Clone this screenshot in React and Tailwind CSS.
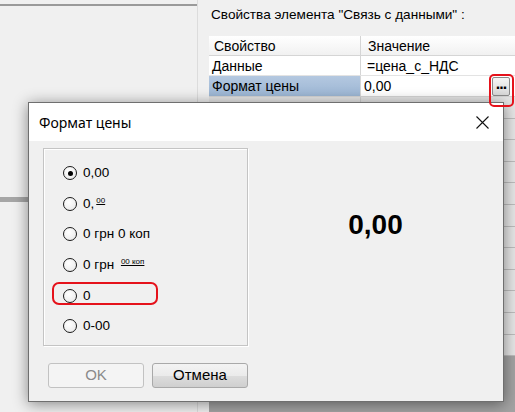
import React from "react";

const rows = Array.from({ length: 12 });

function Radio({ checked }) {
  return (
    <span className="relative inline-flex w-[14px] h-[14px] rounded-full border-[1.5px] border-[#1a1a1a] bg-[radial-gradient(circle_at_40%_35%,#ffffff,#e6e6e6)] items-center justify-center shrink-0">
      {checked && <span className="w-[5px] h-[5px] rounded-full bg-black" />}
    </span>
  );
}

function Sup({ children }) {
  return (
    <span className="text-[8px] underline relative top-[-5px] leading-none">{children}</span>
  );
}

export default function App() {
  const opts = [
    { c: true, label: <>0,00</> },
    { label: <>0,<span className="ml-[2px]"><Sup>00</Sup></span></> },
    { label: <>0 грн 0 коп</> },
    { label: <>0 грн <span className="ml-[3px]"><Sup>00 коп</Sup></span></> },
    { label: <>0</> },
    { label: <>0-00</> },
  ];
  return (
    <div className="relative w-[515px] h-[412px] overflow-hidden bg-[#f0f0f0] flex text-black" style={{ fontFamily: '"Liberation Sans", Arial, sans-serif' }}>
      {/* left panel */}
      <div className="w-[197px] shrink-0 flex flex-col">
        <div className="mt-[4px] h-[2px] bg-[#9a9a9a]" />
        <div className="mt-[191px] h-[5px] bg-[#a6a6a6]" />
      </div>
      <div className="w-[1px] bg-[#dcdcdc] shrink-0" />
      {/* right panel */}
      <div className="flex-1 flex flex-col pl-[11px] min-w-0">
        <div className="h-[36px] pt-[7px] pl-[2px] text-[13.6px] leading-[16px] whitespace-nowrap">Свойства элемента "Связь с данными" :</div>
        <div className="flex-1 bg-[#a3a3a3] flex flex-col text-[14px] leading-none">
          <div className="h-[20px] flex bg-[linear-gradient(#ffffff,#f1f1f1)] border-b border-[#d5d5d5]">
            <div className="w-[152px] border-r border-[#d5d5d5] flex items-center pl-[5px]">Свойство</div>
            <div className="flex-1 flex items-center pl-[7px]">Значение</div>
          </div>
          <div className="h-[20px] flex bg-white border-b border-[#e3e3e3]">
            <div className="w-[152px] border-r border-[#d5d5d5] flex items-center pl-[3px]">Данные</div>
            <div className="flex-1 flex items-center pl-[6px] whitespace-nowrap">=цена_с_НДС</div>
          </div>
          <div className="h-[21px] flex bg-white border-b border-[#d5d5d5]">
            <div className="w-[152px] border-r border-[#d5d5d5] flex items-center pl-[3px] bg-[linear-gradient(#b4c8e0,#9cb6d4)]">Формат цены</div>
            <div className="flex-1 flex items-center pl-[3px]">0,00</div>
            <div className="w-[18px] h-[19px] mr-[5px] mt-[1px] border border-[#8a8a8a] rounded-[2px] bg-[linear-gradient(#f6f6f6,#d8d8d8)] flex items-center justify-center font-bold text-[16px] leading-none pb-[6px] tracking-[-1px]">...</div>
          </div>
          {rows.map((_, i) => (
            <div key={i} className="h-[21.6px] flex bg-[#e6e6e6] border-b border-[#bdbdbd] shrink-0">
              <div className="w-[152px] border-r border-[#cfcfcf]" />
              <div className="flex-1" />
            </div>
          ))}
        </div>
      </div>

      {/* dialog */}
      <div className="absolute left-[28px] top-[102px] w-[476px] h-[300px] border border-[#6f6f6f] bg-[#f0f0f0] shadow-[0_2px_14px_rgba(0,0,0,0.45)] flex flex-col">
        <div className="h-[38px] bg-white flex items-center justify-between pl-[10px] pr-[14px] shrink-0">
          <span className="text-[14px]" style={{ fontFamily: '"Noto Sans", sans-serif' }}>Формат цены</span>
          <svg width="13" height="13" viewBox="0 0 13 13"><path d="M0.5 0.5L12.5 12.5M12.5 0.5L0.5 12.5" stroke="#111" strokeWidth="1.1" /></svg>
        </div>
        <div className="flex-1 flex flex-col pl-[14px] pt-[7px]">
          <div className="flex">
            <div className="w-[205px] h-[198px] border border-[#c4c4c4] shadow-[inset_1px_1px_0_#ffffff,1px_1px_0_#ffffff] pt-[9px] pl-[19px] flex flex-col text-[13.5px]">
              {opts.map((o, i) => (
                <div key={i} className="h-[30.6px] flex items-center gap-[6px] whitespace-nowrap">
                  <Radio checked={o.c} />
                  <span>{o.label}</span>
                </div>
              ))}
            </div>
            <div className="flex-1 flex justify-center pt-[63px]">
              <span className="font-bold text-[28px] leading-none h-[30px]">0,00</span>
            </div>
          </div>
          <div className="flex gap-[8px] mt-[17px] ml-[5px] text-[15px]">
            <div className="w-[96px] h-[25px] rounded-[3px] border border-[#c2c2c2] bg-[#f4f4f4] flex items-center justify-center text-[#8a8a8a]">OK</div>
            <div className="w-[96px] h-[25px] rounded-[3px] border border-[#a9a9a9] bg-[linear-gradient(#f3f3f3_0%,#ebebeb_50%,#dddddd_51%,#cfcfcf_100%)] flex items-center justify-center">Отмена</div>
          </div>
        </div>
      </div>

      {/* annotations */}
      <div className="absolute left-[489px] top-[74px] w-[25px] h-[33px] border-2 border-[#e5121b] rounded-[5px]" />
      <div className="absolute left-[52px] top-[282px] w-[106px] h-[23px] border-2 border-[#e5121b] rounded-[7px]" />
    </div>
  );
}
